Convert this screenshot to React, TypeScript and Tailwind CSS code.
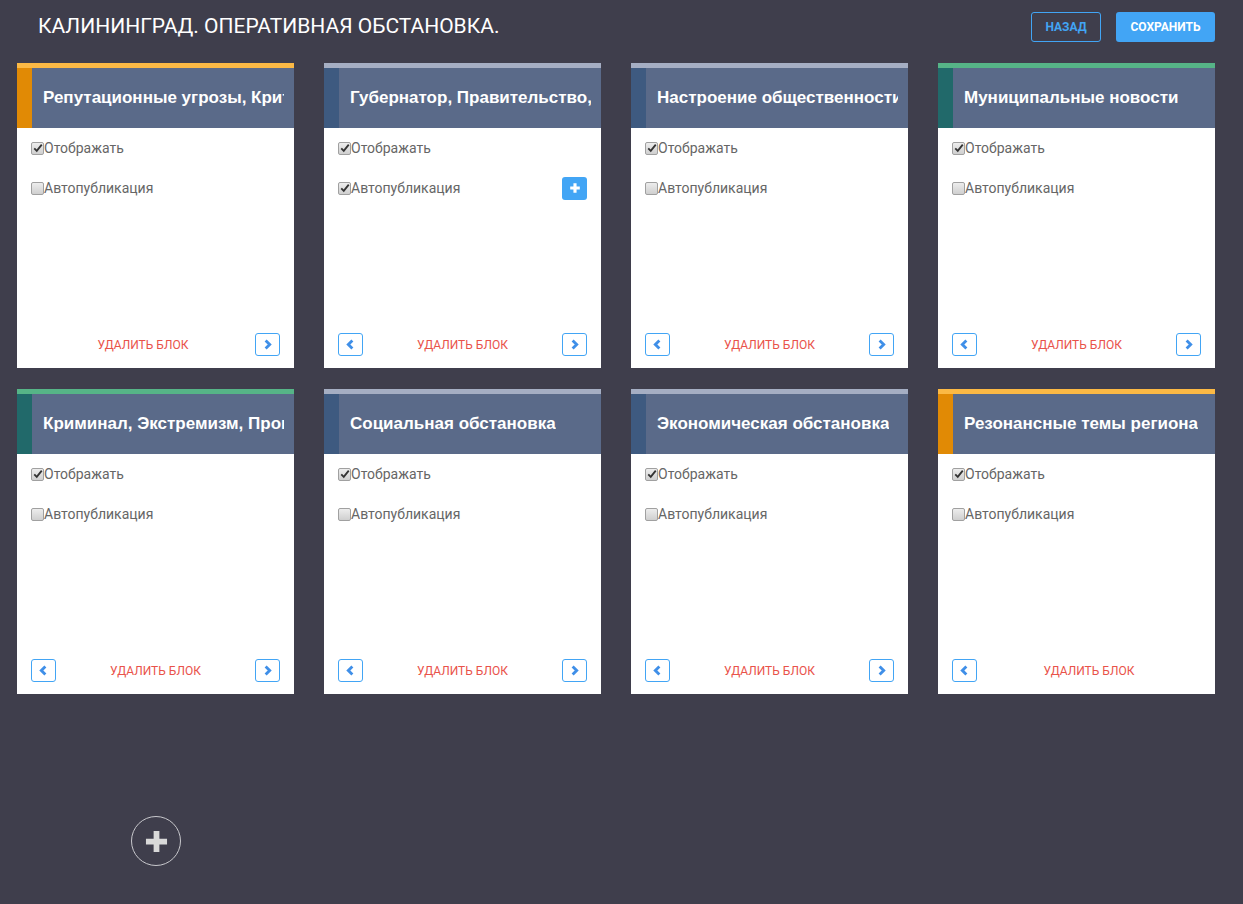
import React from "react";

type Block = {
  title: string;
  bar: string;
  accent: string;
  show: boolean;
  auto: boolean;
  plus?: boolean;
  prev: boolean;
  next: boolean;
};

const ORANGE = { bar: "bg-[#fbb945]", accent: "bg-[#e18a05]" };
const GRAY = { bar: "bg-[#a5aec3]", accent: "bg-[#3e5a80]" };
const GREEN = { bar: "bg-[#56b487]", accent: "bg-[#21696a]" };

const blocks: Block[] = [
  { title: "Репутационные угрозы, Критика", ...ORANGE, show: true, auto: false, prev: false, next: true },
  { title: "Губернатор, Правительство, Администрация", ...GRAY, show: true, auto: true, plus: true, prev: true, next: true },
  { title: "Настроение общественности", ...GRAY, show: true, auto: false, prev: true, next: true },
  { title: "Муниципальные новости", ...GREEN, show: true, auto: false, prev: true, next: true },
  { title: "Криминал, Экстремизм, Происшествия", ...GREEN, show: true, auto: false, prev: true, next: true },
  { title: "Социальная обстановка", ...GRAY, show: true, auto: false, prev: true, next: true },
  { title: "Экономическая обстановка", ...GRAY, show: true, auto: false, prev: true, next: true },
  { title: "Резонансные темы региона", ...ORANGE, show: true, auto: false, prev: true, next: false },
];

const Check = ({ on }: { on: boolean }) => (
  <span className="relative inline-block w-[13px] h-[13px] rounded-[2px] border border-[#a0a0a0] bg-gradient-to-b from-[#ededed] to-[#cfcfcf] shrink-0">
    {on && (
      <svg viewBox="0 0 12 12" className="absolute left-[1px] top-[0px] w-[10px] h-[10px]">
        <path d="M1.5 6.5 L4.5 9.5 L10.5 2" fill="none" stroke="#333" strokeWidth="2.2" />
      </svg>
    )}
  </span>
);

const Arrow = ({ dir }: { dir: "l" | "r" }) => (
  <button className="w-[25px] h-[23px] rounded-[3px] border border-[#42a5f5] bg-white flex items-center justify-center">
    <svg viewBox="0 0 10 10" className="w-[11px] h-[11px]">
      <path
        d={dir === "r" ? "M3.3 1.3 L7 5 L3.3 8.7" : "M6.7 1.3 L3 5 L6.7 8.7"}
        fill="none"
        stroke="#3f8fe8"
        strokeWidth="2.6"
      />
    </svg>
  </button>
);

const Card = ({ b }: { b: Block }) => (
  <div className="bg-white h-[305px] flex flex-col">
    <div className={`h-[5px] ${b.bar}`} />
    <div className="h-[60px] bg-[#5a6a89] flex">
      <div className={`w-[15px] ${b.accent}`} />
      <div className="flex-1 overflow-hidden pl-[11px] pr-[10px] flex items-center">
        <span className="whitespace-nowrap overflow-hidden text-white font-bold text-[17px] font-['Liberation_Sans',Arial,sans-serif]">
          {b.title}
        </span>
      </div>
    </div>
    <div className="flex-1 flex flex-col px-[14px] pt-[10px] pb-[12px] font-['Roboto',sans-serif] text-[14px] text-[#666]">
      <div className="h-[20px] flex items-center">
        <Check on={b.show} />
        <span>Отображать</span>
      </div>
      <div className="h-[20px] mt-[20px] flex items-center">
        <Check on={b.auto} />
        <span>Автопубликация</span>
        {b.plus && (
          <button className="ml-auto w-[25px] h-[23px] rounded-[3px] bg-[#42a5f5] flex items-center justify-center">
            <svg viewBox="0 0 10 10" className="w-[12px] h-[12px]">
              <path d="M5 1 V9 M1 5 H9" stroke="#fff" strokeWidth="2.6" />
            </svg>
          </button>
        )}
      </div>
      <div className="mt-auto flex items-center">
        {b.prev && <Arrow dir="l" />}
        <span className="flex-1 text-center text-[12px] text-[#e9524a] font-['Roboto',sans-serif]">
          УДАЛИТЬ БЛОК
        </span>
        {b.next && <Arrow dir="r" />}
      </div>
    </div>
  </div>
);

export default function App() {
  return (
    <div className="min-h-[904px] bg-[#3f3e4c] pl-[17px] pr-[28px] font-['Roboto',sans-serif]">
      <div className="h-[54px] flex items-center justify-between">
        <h1 className="pl-[21px] text-white text-[21px] font-normal">КАЛИНИНГРАД. ОПЕРАТИВНАЯ ОБСТАНОВКА.</h1>
        <div className="flex gap-[15px]">
          <button className="w-[70px] h-[30px] rounded-[3px] border border-[#42a5f5] text-[#42a5f5] text-[12px] font-bold">
            НАЗАД
          </button>
          <button className="w-[99px] h-[30px] rounded-[3px] bg-[#42a5f5] text-white text-[12px] font-bold">
            СОХРАНИТЬ
          </button>
        </div>
      </div>
      <div className="mt-[9px] grid grid-cols-[repeat(4,277px)] gap-x-[30px] gap-y-[21px]">
        {blocks.map((b, i) => (
          <Card key={i} b={b} />
        ))}
      </div>
      <div className="mt-[122px] ml-[114px] w-[50px] h-[50px] rounded-full border border-[#c8c8cc] flex items-center justify-center">
        <svg viewBox="0 0 24 24" className="w-[23px] h-[23px]">
          <path d="M12 1 V23 M1 12 H23" stroke="#d9d9d9" strokeWidth="6" />
        </svg>
      </div>
    </div>
  );
}
